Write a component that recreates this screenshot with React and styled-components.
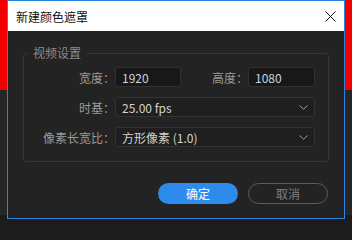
import React from 'react'
import styled, { createGlobalStyle } from 'styled-components'

const GlobalStyle = createGlobalStyle`
    html, body {
        margin: 0;
        padding: 0;
        background-color: #1c1c1c;
    }
    body {
        font-family: "Noto Sans CJK SC", "Noto Sans", sans-serif;
    }
`

function Chevron() {
    return (
        <svg width="9" height="5" viewBox="0 0 9 5">
            <polyline points="0.5,0.5 4.5,4.2 8.5,0.5" fill="none" stroke="#a0a0a0" strokeWidth="1" />
        </svg>
    )
}

function CloseIcon() {
    return (
        <svg width="11" height="11" viewBox="0 0 11 11">
            <path d="M0.5 0.5 L10.5 10.5 M10.5 0.5 L0.5 10.5" stroke="#111" strokeWidth="1" />
        </svg>
    )
}

function App() {
    return (
        <Backdrop>
            <GlobalStyle />
            <Dialog>
                <TitleBar>
                    <Title>新建颜色遮罩</Title>
                    <CloseButton><CloseIcon /></CloseButton>
                </TitleBar>

                <Body>
                    <Group>
                        <Legend>视频设置</Legend>
                        <Rows>
                            <Row>
                                <Label>宽度：</Label>
                                <Field width={66}>1920</Field>
                                <Label grow>高度：</Label>
                                <Field width={67}>1080</Field>
                            </Row>
                            <Row>
                                <Label>时基：</Label>
                                <Select>
                                    <span>25.00 fps</span>
                                    <Chevron />
                                </Select>
                            </Row>
                            <Row>
                                <Label>像素长宽比：</Label>
                                <Select>
                                    <span>方形像素 (1.0)</span>
                                    <Chevron />
                                </Select>
                            </Row>
                        </Rows>
                    </Group>

                    <Buttons>
                        <Button primary>确定</Button>
                        <Button>取消</Button>
                    </Buttons>
                </Body>
            </Dialog>
        </Backdrop>
    )
}

export default App

const Backdrop = styled.div`
    width: 352px;
    height: 226px;
    overflow: hidden;
    background: linear-gradient(to bottom, #f00000 0 90px, #262626 90px 215px, #1c1c1c 215px);
`

const Dialog = styled.div`
    box-sizing: border-box;
    margin-left: 7px;
    width: 338px;
    height: 219px;
    border: 1px solid #2a86dc;
    display: flex;
    flex-direction: column;
    background-color: #232323;
`

const TitleBar = styled.div`
    height: 30px;
    flex-shrink: 0;
    background-color: #ffffff;
    display: flex;
    align-items: center;
    justify-content: space-between;
    padding: 0 8px 0 8px;
`

const Title = styled.div`
    font-size: 12px;
    color: #111;
`

const CloseButton = styled.div`
    display: flex;
    width: 11px;
    height: 11px;
`

const Body = styled.div`
    flex: 1;
    display: flex;
    flex-direction: column;
    padding: 14px 15px 14px 15px;
`

const Group = styled.fieldset`
    margin: 0;
    padding: 6px 13px 14px 0;
    border: 1px solid #363636;
    border-radius: 3px;
    min-inline-size: 0;
`

const Legend = styled.legend`
    margin-left: 3px;
    padding: 0 6px;
    font-size: 12px;
    line-height: 16px;
    color: #8c8c8c;
`

const Rows = styled.div`
    display: flex;
    flex-direction: column;
    gap: 10px;
`

const Row = styled.div`
    display: flex;
    align-items: center;
    height: 20px;
`

const Label = styled.div`
    width: ${props => props.grow ? 'auto' : '91px'};
    flex: ${props => props.grow ? 1 : 'none'};
    text-align: right;
    font-size: 12px;
    color: #9a9a9a;
    white-space: nowrap;
`

const Field = styled.div`
    box-sizing: border-box;
    width: ${props => props.width}px;
    height: 20px;
    padding: 0 6px;
    display: flex;
    align-items: center;
    background-color: #181818;
    border: 1px solid #303030;
    border-radius: 3px;
    font-size: 12px;
    color: #c9d5e2;
`

const Select = styled.div`
    box-sizing: border-box;
    flex: 1;
    height: 20px;
    padding: 0 6px 0 6px;
    display: flex;
    align-items: center;
    justify-content: space-between;
    background-color: #1f1f1f;
    border: 1px solid #323232;
    border-radius: 3px;
    font-size: 12px;
    color: #d2d2d2;
`

const Buttons = styled.div`
    margin-top: auto;
    display: flex;
    justify-content: flex-end;
    gap: 10px;
    padding-right: 1px;
`

const Button = styled.div`
    box-sizing: border-box;
    width: 80px;
    height: 21px;
    border-radius: 11px;
    display: flex;
    align-items: center;
    justify-content: center;
    font-size: 12px;
    color: ${props => props.primary ? '#ffffff' : '#808080'};
    background-color: ${props => props.primary ? '#2d8ceb' : 'transparent'};
    border: ${props => props.primary ? 'none' : '1.5px solid #5c5c5c'};
`
